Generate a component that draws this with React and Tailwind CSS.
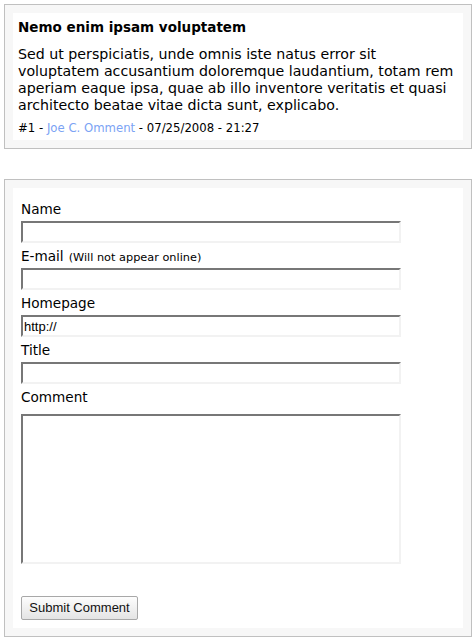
import { useState } from 'react'

const fields = [
  { id: 'name', label: 'Name' },
  { id: 'email', label: 'E-mail', note: '(Will not appear online)' },
  { id: 'homepage', label: 'Homepage', value: 'http://' },
  { id: 'title', label: 'Title' },
]

// Old-school inset field border: dark on top/left, pale on bottom/right
const insetBorder =
  'border-2 border-t-[#777777] border-l-[#777777] border-b-[#f2f2f2] border-r-[#f2f2f2] bg-white outline-none'

function Box({ children, className = '' }) {
  return (
    <div className={`border border-[#c0c0c0] bg-[#f7f7f7] p-2 ${className}`}>
      {children}
    </div>
  )
}

export default function App() {
  const [values, setValues] = useState({ homepage: 'http://' })

  const update = (id) => (e) => setValues((v) => ({ ...v, [id]: e.target.value }))

  return (
    <div className="min-h-screen bg-white px-1 pt-1 text-black font-['DejaVu_Sans',Verdana,sans-serif]">
      {/* ── Comment ─────────────────────────────────────────── */}
      <Box>
        <div className="bg-white px-[5px] pt-[6px] pb-[5px]">
          <h3 className="text-[13.5px] leading-[17px] font-bold">Nemo enim ipsam voluptatem</h3>
          <p className="mt-[10px] text-[14.2px] leading-[17px]">
            Sed ut perspiciatis, unde omnis iste natus error sit voluptatem accusantium doloremque
            laudantium, totam rem aperiam eaque ipsa, quae ab illo inventore veritatis et quasi
            architecto beatae vitae dicta sunt, explicabo.
          </p>
          <p className="mt-[7px] text-[11.7px] leading-[14px]">
            #1 - <a href="#" className="text-[#7ba3f4]">Joe C. Omment</a> - 07/25/2008 - 21:27
          </p>
        </div>
      </Box>

      {/* ── Comment form ────────────────────────────────────── */}
      <Box className="mt-[30px]">
        <form className="bg-white p-2" onSubmit={(e) => e.preventDefault()}>
          {fields.map((f) => (
            <div key={f.id}>
              <label htmlFor={f.id} className="mt-[5px] mb-[3px] block h-[17px] text-[13.6px] leading-[17px]">
                {f.label}
                {f.note && <span className="ml-[5px] text-[11.3px]">{f.note}</span>}
              </label>
              <input
                id={f.id}
                type="text"
                value={values[f.id] ?? ''}
                onChange={update(f.id)}
                className={`block h-[22px] w-[380px] px-[1px] font-['Liberation_Sans',Arial,sans-serif] text-[13px] ${insetBorder}`}
              />
            </div>
          ))}

          <label htmlFor="comment" className="mt-[5px] mb-[8px] block h-[17px] text-[13.6px] leading-[17px]">
            Comment
          </label>
          <textarea
            id="comment"
            value={values.comment ?? ''}
            onChange={update('comment')}
            className={`block h-[150px] w-[380px] resize-none font-['Liberation_Sans',Arial,sans-serif] text-[13px] ${insetBorder}`}
          />

          <button
            type="submit"
            className="mt-[32px] block h-[24px] w-[117px] rounded-[2px] border border-[#a8a8a8] bg-linear-to-b from-[#fdfdfd] to-[#e4e4e4] font-['Liberation_Sans',Arial,sans-serif] text-[13px] text-[#111]"
          >
            Submit Comment
          </button>
        </form>
      </Box>
    </div>
  )
}
